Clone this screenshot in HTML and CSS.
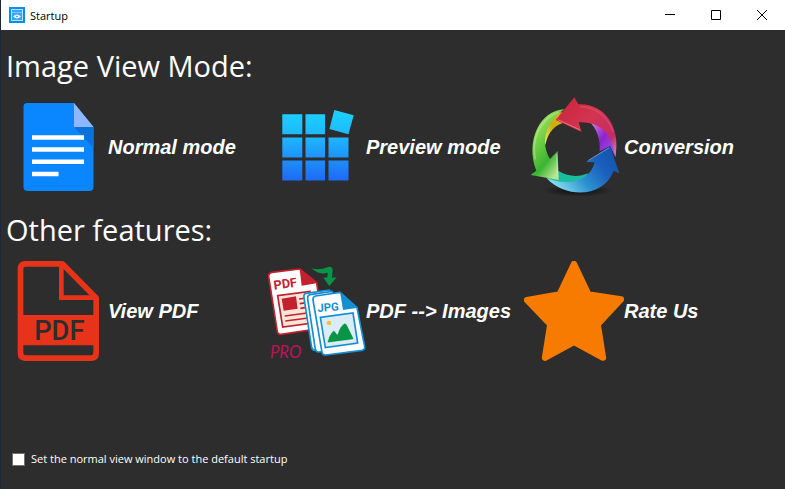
FILE: index.html
```html
<!DOCTYPE html>
<html lang="en">
<head>
<meta charset="utf-8">
<title>Startup</title>
<link rel="stylesheet" href="styles.css">
</head>
<body>
<div class="window">
  <header class="titlebar">
    <svg class="app-icon" viewBox="0 0 16 16" aria-hidden="true">
      <rect width="16" height="16" fill="#0a8cf5"/>
      <rect x="2.5" y="2.5" width="11" height="11" fill="#35a5fa" stroke="#b9e0ff"/>
      <path d="M3 5.5h10" stroke="#7cc5fd"/>
      <path d="M4 9.500q4-4 8 0q-4 4-8 0z" fill="#e8f6ff"/>
      <circle cx="8" cy="9.500" r=".8" fill="#1a90ee"/>
    </svg>
    <h1 class="title">Startup</h1>
    <div class="controls">
      <button class="control" type="button" aria-label="Minimize"><svg viewBox="0 0 10 10"><path d="M0 4.500h10"/></svg></button>
      <button class="control" type="button" aria-label="Maximize"><svg viewBox="0 0 10 10"><path d="M.5.5h9v9h-9z"/></svg></button>
      <button class="control" type="button" aria-label="Close"><svg viewBox="0 0 10 10"><path d="M0 0l10 10M10 0L0 10"/></svg></button>
    </div>
  </header>

  <main class="content">
    <section class="group">
      <h2 class="heading">Image View Mode:</h2>
      <div class="tiles">
        <button class="tile" type="button">
          <svg class="tile-icon" viewBox="0 0 100 100" aria-hidden="true">
            <path d="M19 6H66L85.500 30V90q0 4-4 4H19.500q-4 0-4-4V10q0-4 3.500-4z" fill="#0a87ff"/>
            <path d="M66 30h19.500v21z" fill="#0872d8"/>
            <path d="M66 6L85.500 30H66z" fill="#8db8ff"/>
            <path d="M24 40.500h52M24 52.500h52M24 64.800h52M24 77h26.500" stroke="#fff" stroke-width="4.600"/>
          </svg>
          <span>Normal mode</span>
        </button>
        <button class="tile" type="button">
          <svg class="tile-icon" viewBox="0 0 100 100" aria-hidden="true">
            <defs><linearGradient id="sky" gradientUnits="userSpaceOnUse" x1="0" y1="17" x2="0" y2="84"><stop offset="0" stop-color="#1cceff"/><stop offset=".35" stop-color="#1eb6ff"/><stop offset="1" stop-color="#1e69f5"/></linearGradient></defs>
            <path fill="url(#sky)" d="M16.300 17.300h20v20h-20zM39.500 17.300h19.500v20H39.500zM16.300 40.500h20v20h-20zM39.500 40.500h19.500v20H39.500zM62.500 40.500h20v20h-20zM16.300 63.500h20v20h-20zM39.500 63.500h19.500v20H39.500zM62.500 63.500h20v20h-20zM68.300 13l19.400 5.300-5.300 19-19-5.300z"/>
          </svg>
          <span>Preview mode</span>
        </button>
        <button class="tile" type="button">
          <svg class="tile-icon" viewBox="0 0 100 100" aria-hidden="true">
            <defs>
              <linearGradient id="red" x1="0" y1="0" x2="1" y2="1"><stop offset="0" stop-color="#c92238"/><stop offset=".45" stop-color="#d33450"/><stop offset=".8" stop-color="#c32c68"/><stop offset="1" stop-color="#d994cf"/></linearGradient>
              <linearGradient id="green" x1="0" y1="0" x2=".6" y2="1"><stop offset="0" stop-color="#c9ec8c"/><stop offset=".45" stop-color="#72cf43"/><stop offset=".75" stop-color="#3bb432"/><stop offset="1" stop-color="#b4e58f"/></linearGradient>
              <linearGradient id="blue" x1="0" y1=".7" x2="1" y2=".2"><stop offset="0" stop-color="#8de4f2"/><stop offset=".4" stop-color="#2b8fcf"/><stop offset=".7" stop-color="#1b5fbd"/><stop offset="1" stop-color="#1552ae"/></linearGradient>
              <linearGradient id="yellow" x1="0" y1="1" x2="1" y2="0"><stop offset="0" stop-color="#f4e36a"/><stop offset=".5" stop-color="#c9ad0d"/><stop offset="1" stop-color="#edb51c"/></linearGradient>
              <linearGradient id="purple" x1="0" y1="0" x2="1" y2="1"><stop offset="0" stop-color="#dd8be8"/><stop offset=".5" stop-color="#8c24cf"/><stop offset="1" stop-color="#a45ae8"/></linearGradient>
              <radialGradient id="shade"><stop offset=".3" stop-color="#111" stop-opacity=".8"/><stop offset="1" stop-color="#111" stop-opacity="0"/></radialGradient>
            </defs>
            <g transform="translate(-9 -7) scale(.33333)">
              <ellipse cx="188" cy="302" rx="105" ry="18" fill="url(#shade)"/>
              <path d="M91 165C84 120 105 75 140 66L150 97C120 105 100 125 91 165z" fill="url(#yellow)"/>
              <path d="M222 92C265 85 300 130 301 200L285 168 254 184C257 145 245 118 222 92z" fill="url(#purple)"/>
              <path d="M131 243C160 260 190 262 220 250L205 275C165 290 130 282 96 265z" fill="#19bda0"/>
              <path d="M148 58C75 60 30 155 64 242L47 255 131 270 128 183 105 207C80 165 82 105 148 58z" fill="url(#green)"/>
              <path d="M122 90L178 22 190 43C262 38 320 105 301 202C291 137 262 94 191 97L200 126z" fill="url(#red)"/>
              <path d="M285 168L313 250 296 242C268 320 158 330 94 264C158 290 226 274 239 217L213 216z" fill="url(#blue)"/>
              <path d="M132 66C78 84 47 145 61 208" fill="none" stroke="#d7f5b6" stroke-width="5" opacity=".4"/>
              <path d="M195 50C242 50 278 79 294 125" fill="none" stroke="#ee6f80" stroke-width="5" opacity=".3"/>
              <path d="M128 89L194 119M220 211L282 174M125 192L127 262" fill="none" stroke="#fff" stroke-width="3" opacity=".35"/>
            </g>
          </svg>
          <span>Conversion</span>
        </button>
      </div>
    </section>

    <section class="group">
      <h2 class="heading">Other features:</h2>
      <div class="tiles">
        <button class="tile" type="button">
          <svg class="tile-icon" viewBox="0 0 100 100" aria-hidden="true">
            <g transform="translate(-8 -61) scale(.33333)">
              <path d="M77 191.500H187L288.500 294V459q0 15.500-15.500 15.500H77q-15.500 0-15.500-15.500V207q0-15.500 15.500-15.500z" fill="none" stroke="#e8331b" stroke-width="17" stroke-linejoin="round"/>
              <path d="M184 195V293H285" fill="none" stroke="#e8331b" stroke-width="14"/>
              <path d="M61 345H289V436H61z" fill="#e8331b"/>
              <text class="pdf-band" x="178" y="420" text-anchor="middle">PDF</text>
            </g>
          </svg>
          <span>View PDF</span>
        </button>
        <button class="tile" type="button">
          <svg class="tile-icon" viewBox="0 0 100 100" aria-hidden="true">
            <g transform="translate(-6 -6) scale(.33333)">
              <path d="M36 52L119 42 170 83 188 219 63 238Q54 239 52 230L26 65Q25 54 36 52z" fill="#fff" stroke="#c4202e" stroke-width="5" stroke-linejoin="round"/>
              <path d="M119 42L174 84 125 92z" fill="#c4202e"/>
              <text class="sheet-label sheet-label-red" transform="translate(43 104) rotate(-8)">PDF</text>
              <path d="M53 122L150 109 158 204 68 216z" fill="#fbe5d9" stroke="#c4202e" stroke-width="5"/>
              <path d="M65 131L108 124 113 161 71 167z" fill="#c4202e"/>
              <path d="M117 132L140 129M119 146L140 143M121 160L140 157M74 183L142 174M76 198L145 189" stroke="#c4202e" stroke-width="5"/>
              <path d="M155 40Q178 47 207 35Q218 34 218 46L216 68 230 67 208 93 190 68 202 67 203 53Q175 61 155 40z" fill="#099447"/>
              <g fill="#fff" stroke="#168fd2" stroke-width="5" stroke-linejoin="round">
                <path d="M139 115L208 105 250 270 165 286Q158 286 155 278L132 128Q130 116 139 115z"/>
                <path d="M151 119L216 109 270 276 176 291Q169 292 166 283L143 132Q142 120 151 119z"/>
                <path d="M167 123L240 112 291 158 314 275Q316 284 306 286L198 300Q188 301 186 292L159 135Q158 125 167 123z"/>
              </g>
              <path d="M240 110L294 158 249 165z" fill="#168fd2"/>
              <text class="sheet-label sheet-label-blue" transform="translate(173 171) rotate(-4)">JPG</text>
              <path d="M181 187L279 174 293 264 196 278z" fill="#d9ecf8" stroke="#168fd2" stroke-width="5"/>
              <circle cx="207" cy="204" r="7" fill="#f5c52c"/>
              <path d="M201 264Q205 243 218 228Q224 224 228 233L232 238Q239 214 253 205Q258 202 263 213L281 250Q282 253 277 254z" fill="#099447" stroke="#fff" stroke-width="2"/>
              <text class="pro" x="30" y="309">PRO</text>
            </g>
          </svg>
          <span>PDF --&gt; Images</span>
        </button>
        <button class="tile" type="button">
          <svg class="tile-icon" viewBox="0 0 100 100" aria-hidden="true">
            <g transform="translate(-9 -11) scale(.33333)">
              <path d="M177 42L220 133 318 148 248 223 264 323 177 276 90 323 106 223 36 150 134 133z" fill="#f77b00" stroke="#f77b00" stroke-width="19" stroke-linejoin="round"/>
            </g>
          </svg>
          <span>Rate Us</span>
        </button>
      </div>
    </section>

    <label class="startup-option"><input type="checkbox"><span>Set the normal view window to the default startup</span></label>
  </main>
</div>
</body>
</html>
```

FILE: styles.css
```css
* { box-sizing: border-box; }

body { margin: 0; }

button {
  padding: 0;
  border: 0;
  background: transparent;
  color: inherit;
}

.window {
  display: flex;
  flex-direction: column;
  min-height: 100vh;
  border-left: 1px solid #1b2838;
  background: #2d2d2d;
  color: #fff;
  font-family: "Open Sans", "Noto Sans", sans-serif;
}

.titlebar {
  display: flex;
  align-items: center;
  height: 30px;
  padding-left: 8px;
  background: #fff;
  color: #000;
}

.app-icon {
  width: 16px;
  height: 16px;
  margin-right: 5px;
}

.title {
  margin: 0;
  font-size: 11px;
  font-weight: 400;
}

.controls {
  display: flex;
  align-self: stretch;
  margin-left: auto;
}

.control {
  display: grid;
  place-items: center;
  width: 46px;
}

.control svg {
  width: 10px;
  height: 10px;
  overflow: visible;
  fill: none;
  stroke: #000;
  stroke-width: 1;
}

.content {
  display: flex;
  flex: 1;
  flex-direction: column;
  padding: 14px 3px 20px 5px;
}

.group { margin-bottom: 11px; }

.heading {
  margin: 0 0 9px;
  font-size: 29px;
  font-weight: 400;
  line-height: 44px;
}

.tiles {
  display: grid;
  grid-template-columns: repeat(3, 1fr);
  padding-left: 2px;
}

.tile {
  display: flex;
  align-items: center;
  font: italic bold 20px "Liberation Sans", Arial, sans-serif;
  white-space: nowrap;
}

.tile-icon {
  flex: none;
  width: 100px;
  height: 100px;
}

.pdf-band {
  fill: #2d2d2d;
  font: normal 500 82px Roboto, sans-serif;
}

.sheet-label { font: normal bold 38px Roboto, sans-serif; }
.sheet-label-red { fill: #c4202e; }
.sheet-label-blue { fill: #168fd2; font-size: 34px; }

.pro {
  fill: #bd1459;
  font: italic 400 50px Lato, sans-serif;
}

.startup-option {
  display: flex;
  align-items: center;
  gap: 6px;
  margin-top: auto;
  padding-left: 6px;
  font-size: 11px;
  line-height: 20px;
}

.startup-option input {
  appearance: none;
  width: 13px;
  height: 13px;
  margin: 0;
  border: 1px solid #707070;
  background: #fff;
}

.startup-option input:checked { background: #0a87ff; }
```
